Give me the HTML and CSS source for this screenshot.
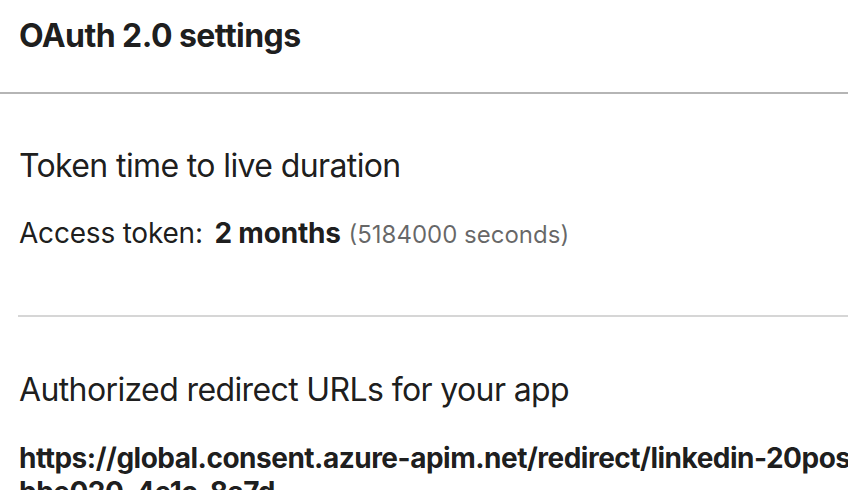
FILE: index.html
```html
<!DOCTYPE html>
<html lang="en">
<head>
<meta charset="utf-8">
<title>OAuth 2.0 settings</title>
<link rel="stylesheet" href="styles.css">
</head>
<body>
<div class="page">
  <header class="card-header">
    <h2 class="card-title">OAuth 2.0 settings</h2>
  </header>
  <section class="block">
    <h3 class="block-title">Token time to live duration</h3>
    <p class="ttl">Access token: <strong class="ttl-value">2 months</strong> <span class="ttl-secs">(5184000 seconds)</span></p>
  </section>
  <section class="block block-divided">
    <h3 class="block-title">Authorized redirect URLs for your app</h3>
    <p class="url">https://global.consent.azure-apim.net/redirect/linkedin-20posts-5f<br>bbe020-4e1c-8a7d</p>
  </section>
</div>
</body>
</html>
```
FILE: styles.css
```css
html, body {
  margin: 0;
  padding: 0;
  background: #ffffff;
  overflow: hidden;
}

body {
  font-family: Inter, "Noto Sans", "Liberation Sans", sans-serif;
  color: rgba(0, 0, 0, 0.9);
}

.page {
  width: 1200px;
}

.card-header {
  height: 76px;
  padding: 16px 19px 0;
  border-bottom: 2px solid #b5b5b5;
}

.card-title {
  margin: 0;
  font-size: 32px;
  line-height: 40px;
  font-weight: 700;
  letter-spacing: -0.55px;
}

.block {
  margin: 0 18px;
  padding: 54px 1px 0;
}

.block-divided {
  border-top: 2px solid #d6d6d6;
  margin-top: 64px;
  padding-top: 55px;
}

.block-title {
  margin: 0;
  font-size: 32px;
  line-height: 36px;
  font-weight: 400;
  letter-spacing: -0.62px;
}

.ttl {
  margin: 33px 0 0;
  font-size: 28px;
  line-height: 32px;
  letter-spacing: -0.2px;
}

.ttl-value {
  font-weight: 700;
  margin-left: 4px;
}

.ttl-secs {
  color: rgba(0, 0, 0, 0.6);
  font-size: 24px;
  letter-spacing: 0;
}

.url {
  margin: 33px 0 0;
  font-size: 28px;
  line-height: 34px;
  font-weight: 700;
  letter-spacing: -0.5px;
  white-space: nowrap;
}
```
